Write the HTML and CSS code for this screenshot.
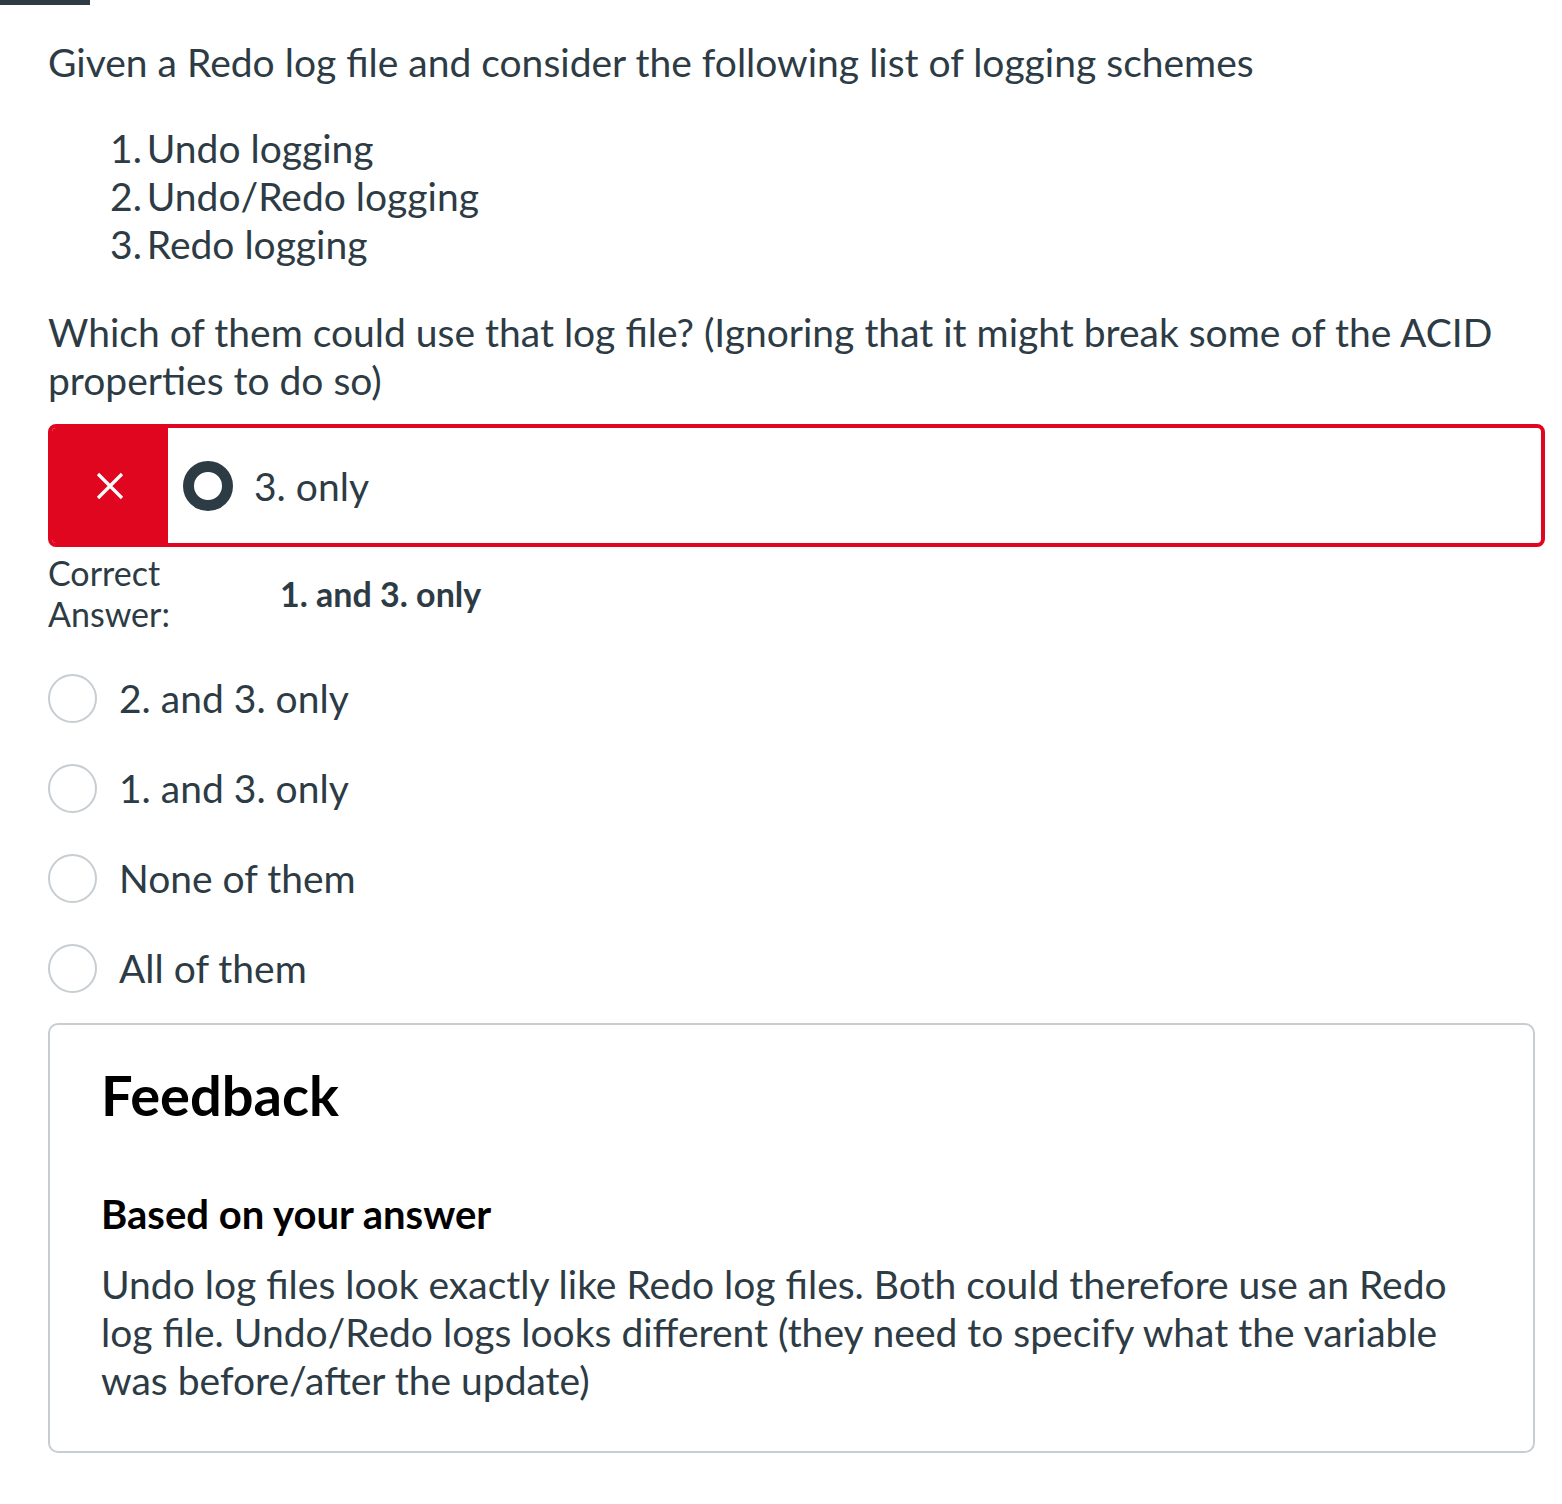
FILE: index.html
```html
<!DOCTYPE html>
<html>
<head>
<meta charset="utf-8">
<link rel="stylesheet" href="styles.css">
</head>
<body>
<div class="topbar"></div>
<div class="question">
  <p class="qtext">Given a Redo log file and consider the following list of logging schemes</p>
  <ol class="schemes">
    <li>Undo logging</li>
    <li>Undo/Redo logging</li>
    <li>Redo logging</li>
  </ol>
  <p class="qtext q2">Which of them could use that log file? (Ignoring that it might break some of the ACID properties to do so)</p>

  <div class="answer wrong">
    <div class="flag">
      <svg width="28" height="28" viewBox="0 0 28 28"><path d="M2 2 L26 26 M26 2 L2 26" stroke="#fff" stroke-width="3.2" fill="none"/></svg>
    </div>
    <div class="answer-body">
      <span class="radio selected"></span>
      <span class="atext">3. only</span>
    </div>
  </div>

  <div class="correct">
    <div class="clabel">Correct<br>Answer:</div>
    <div class="cvalue">1. and 3. only</div>
  </div>

  <div class="options">
    <div class="option"><span class="radio"></span><span class="atext">2. and 3. only</span></div>
    <div class="option"><span class="radio"></span><span class="atext">1. and 3. only</span></div>
    <div class="option"><span class="radio"></span><span class="atext">None of them</span></div>
    <div class="option"><span class="radio"></span><span class="atext">All of them</span></div>
  </div>

  <div class="feedback">
    <h2>Feedback</h2>
    <h3>Based on your answer</h3>
    <p>Undo log files look exactly like Redo log files. Both could therefore use an Redo log file. Undo/Redo logs looks different (they need to specify what the variable was before/after the update)</p>
  </div>
</div>
</body>
</html>
```

FILE: styles.css
```css
html, body {
  margin: 0;
  padding: 0;
  background: #fff;
}
body {
  font-family: Lato, "Open Sans", sans-serif;
  color: #2d3b45;
  width: 1562px;
  height: 1504px;
  overflow: hidden;
}
.topbar {
  width: 90px;
  height: 5px;
  background: #2d3b45;
}
.question {
  padding: 33px 0 0 48px;
}
.qtext {
  font-size: 39px;
  line-height: 48px;
  margin: 0;
  width: 1480px;
}
.schemes {
  margin: 38px 0 40px 0;
  padding-left: 62px;
  list-style-position: inside;
  font-size: 39px;
  line-height: 48px;
}
.schemes li::marker {
  content: counter(list-item) ".\2009";
}
.answer {
  margin-top: 20px;
  width: 1497px;
  height: 123px;
  box-sizing: border-box;
  border: 4px solid #e0061f;
  border-radius: 8px;
  display: flex;
  overflow: hidden;
}
.flag {
  width: 116px;
  background: #e0061f;
  display: flex;
  align-items: center;
  justify-content: center;
}
.answer-body {
  display: flex;
  align-items: center;
  padding-left: 15px;
}
.radio {
  width: 49px;
  height: 49px;
  box-sizing: border-box;
  border: 2px solid #c7cdd1;
  border-radius: 50%;
  flex: none;
  background: #fff;
}
.radio.selected {
  width: 50px;
  height: 50px;
  border: 11px solid #2d3b45;
}
.atext {
  font-size: 39px;
  line-height: 48px;
  margin-left: 21px;
}
.correct {
  display: flex;
  align-items: center;
  margin-top: 5px;
}
.clabel {
  width: 232px;
  font-size: 34px;
  line-height: 41px;
}
.cvalue {
  font-size: 34px;
  font-weight: 700;
  line-height: 41px;
}
.options {
  display: flex;
  flex-direction: column;
  margin-top: 19px;
}
.option {
  height: 90px;
  display: flex;
  align-items: center;
}
.option .atext {
  margin-left: 22px;
}
.feedback {
  margin-top: 10px;
  width: 1487px;
  height: 430px;
  box-sizing: border-box;
  border: 2px solid #c7cdd1;
  border-radius: 10px;
  padding: 40px 51px 0 51px;
}
.feedback h2 {
  margin: 0;
  font-size: 56px;
  line-height: 60px;
  font-weight: 700;
  color: #000;
}
.feedback h3 {
  margin: 65px 0 0 0;
  font-size: 40px;
  line-height: 48px;
  font-weight: 700;
  color: #000;
}
.feedback p {
  margin: 22px 0 0 0;
  font-size: 39px;
  line-height: 48px;
}
```
